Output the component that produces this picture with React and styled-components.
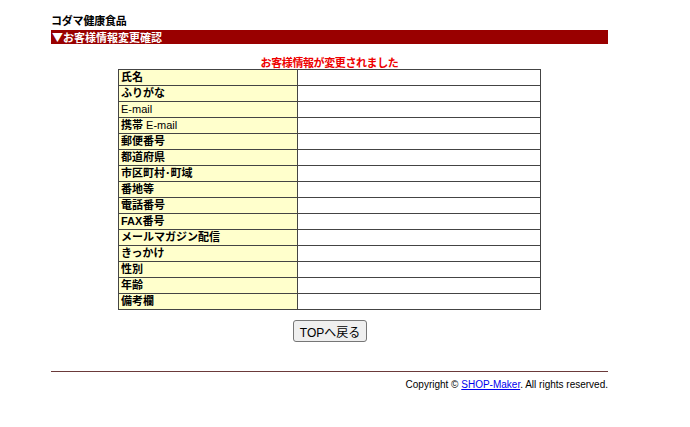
import styled, {createGlobalStyle} from "styled-components";

const fields = [
  ["氏名"],
  ["ふりがな"],
  ["", "E-mail"],
  ["携帯 ", "E-mail"],
  ["郵便番号"],
  ["都道府県"],
  ["市区町村･町域"],
  ["番地等"],
  ["電話番号"],
  ["FAX番号"],
  ["メールマガジン配信"],
  ["きっかけ"],
  ["性別"],
  ["年齢"],
  ["備考欄"],
];

export default function App() {
  return (
    <>
      <GlobalStyle />
      <Page>
        <ShopName>コダマ健康食品</ShopName>
        <SectionBar>▼お客様情報変更確認</SectionBar>
        <Notice>お客様情報が変更されました</Notice>
        <InfoTable>
          <tbody>
            {fields.map(([jp, latin]) => (
              <tr key={jp + (latin || "")}>
                <LabelCell>
                  {jp && <b>{jp}</b>}
                  {latin && <span>{latin}</span>}
                </LabelCell>
                <ValueCell />
              </tr>
            ))}
          </tbody>
        </InfoTable>
        <ButtonRow>
          <BackButton type="button">TOPへ戻る</BackButton>
        </ButtonRow>
        <Rule />
        <Copyright>
          Copyright © <a href="#">SHOP-Maker</a>. All rights reserved.
        </Copyright>
      </Page>
    </>
  );
}

const GlobalStyle = createGlobalStyle`
  body {
    margin: 0;
    background: #fff;
    font-family: "Liberation Sans", "Noto Sans CJK JP", sans-serif;
  }
`;

const Page = styled.div`
  width: 557px;
  margin-left: 51px;
  padding-top: 13px;
`;

const ShopName = styled.div`
  font-size: 11px;
  letter-spacing: -0.2px;
  line-height: 15px;
  font-weight: bold;
  color: #000;
  font-family: "Noto Sans CJK JP", sans-serif;
  height: 17px;
`;

const SectionBar = styled.div`
  background: #990000;
  color: #fff;
  font-size: 11px;
  line-height: 14px;
  height: 14px;
  font-weight: bold;
  padding-left: 1px;
  font-family: "Noto Sans CJK JP", sans-serif;
`;

const Notice = styled.div`
  margin-top: 11px;
  text-align: center;
  color: #ee0000;
  font-weight: bold;
  font-size: 11px;
  letter-spacing: -0.4px;
  line-height: 14px;
  font-family: "Noto Sans CJK JP", sans-serif;
`;

const InfoTable = styled.table`
  width: 423px;
  margin: 0 auto;
  border-collapse: collapse;
  border: 1px solid #111;
`;

const LabelCell = styled.td`
  width: 174px;
  background: #ffffcc;
  border: 1px solid #444;
  padding: 0 2px;
  font-size: 11px;
  line-height: 15px;
  color: #000;
  font-family: "Liberation Sans", "Noto Sans CJK JP", sans-serif;
  white-space: nowrap;

  b {
    font-weight: bold;
  }
  span {
    font-weight: normal;
  }
`;

const ValueCell = styled.td`
  background: #fff;
  border: 1px solid #444;
  padding: 0;
  line-height: 15px;
`;

const ButtonRow = styled.div`
  display: flex;
  justify-content: center;
  padding-top: 10px;
  padding-left: 1px;
`;

const BackButton = styled.button`
  height: 22px;
  padding: 0 6px;
  font-size: 12px;
  font-family: "Liberation Sans", "Noto Sans CJK JP", sans-serif;
  color: #000;
  background: #efefef;
  border: 1px solid #767676;
  border-radius: 3px;
`;

const Rule = styled.div`
  margin-top: 29px;
  height: 1px;
  background: #6b3a3a;
`;

const Copyright = styled.div`
  margin-top: 7px;
  text-align: right;
  font-size: 10px;
  line-height: 12px;
  color: #000;

  a {
    color: #0000ee;
    text-decoration: underline;
  }
`;
